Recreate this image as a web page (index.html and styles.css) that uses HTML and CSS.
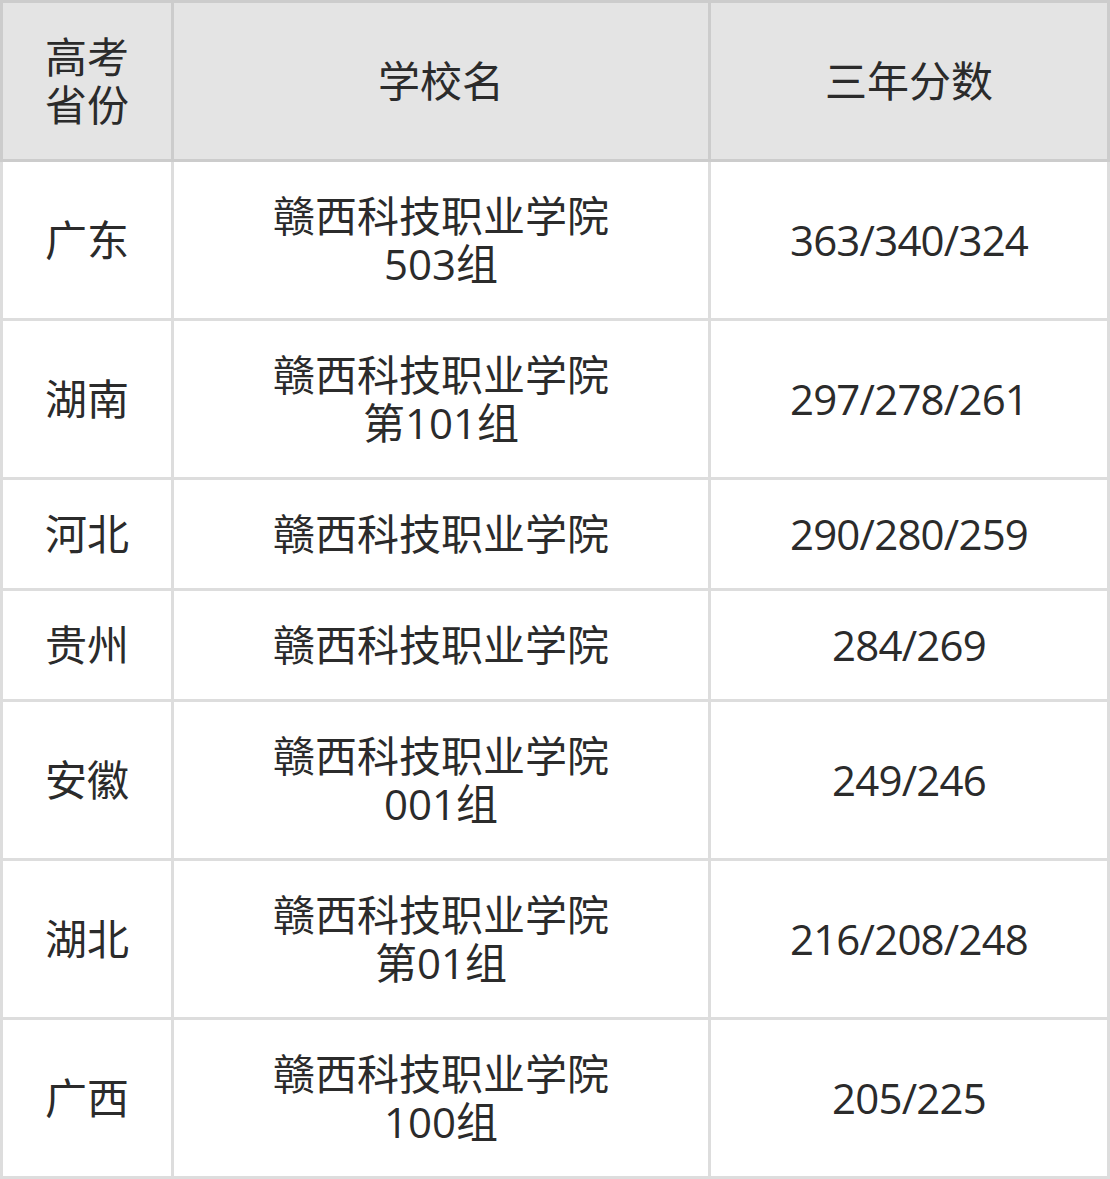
FILE: index.html
```html
<!DOCTYPE html>
<html lang="zh-CN">
<head>
<meta charset="utf-8">
<title>赣西科技职业学院 三年分数</title>
<link rel="stylesheet" href="styles.css">
</head>
<body>
<div class="table">
  <div class="head">
    <div class="cell">高考<br>省份</div>
    <div class="cell">学校名</div>
    <div class="cell">三年分数</div>
  </div>
  <div class="body">
    <div class="cell">广东</div>
    <div class="cell">赣西科技职业学院<br>503组</div>
    <div class="cell score">363/340/324</div>

    <div class="cell">湖南</div>
    <div class="cell">赣西科技职业学院<br>第101组</div>
    <div class="cell score">297/278/261</div>

    <div class="cell">河北</div>
    <div class="cell">赣西科技职业学院</div>
    <div class="cell score">290/280/259</div>

    <div class="cell">贵州</div>
    <div class="cell">赣西科技职业学院</div>
    <div class="cell score">284/269</div>

    <div class="cell">安徽</div>
    <div class="cell">赣西科技职业学院<br>001组</div>
    <div class="cell score">249/246</div>

    <div class="cell">湖北</div>
    <div class="cell">赣西科技职业学院<br>第01组</div>
    <div class="cell score">216/208/248</div>

    <div class="cell">广西</div>
    <div class="cell">赣西科技职业学院<br>100组</div>
    <div class="cell score">205/225</div>
  </div>
</div>
</body>
</html>
```
FILE: styles.css
```css
html, body {
  margin: 0;
  padding: 0;
  background: #ffffff;
}

.table {
  width: 1110px;
  font-family: "Open Sans", "Noto Sans CJK SC", sans-serif;
  font-size: 42px;
  line-height: 48px;
  color: #2b2b2b;
}

.head,
.body {
  display: grid;
  grid-template-columns: 168px 534px 396px;
  column-gap: 3px;
  row-gap: 3px;
}

.head {
  background: #cccccc;
  padding: 3px;
}

.head .cell {
  background: #e4e4e4;
}

.body {
  background: #dddddd;
  padding: 0 3px 3px 3px;
}

.body .cell {
  background: #ffffff;
}

.cell {
  padding: 30px 0;
  text-align: center;
  display: flex;
  align-items: center;
  justify-content: center;
}

.score {
  letter-spacing: -0.8px;
}
```
